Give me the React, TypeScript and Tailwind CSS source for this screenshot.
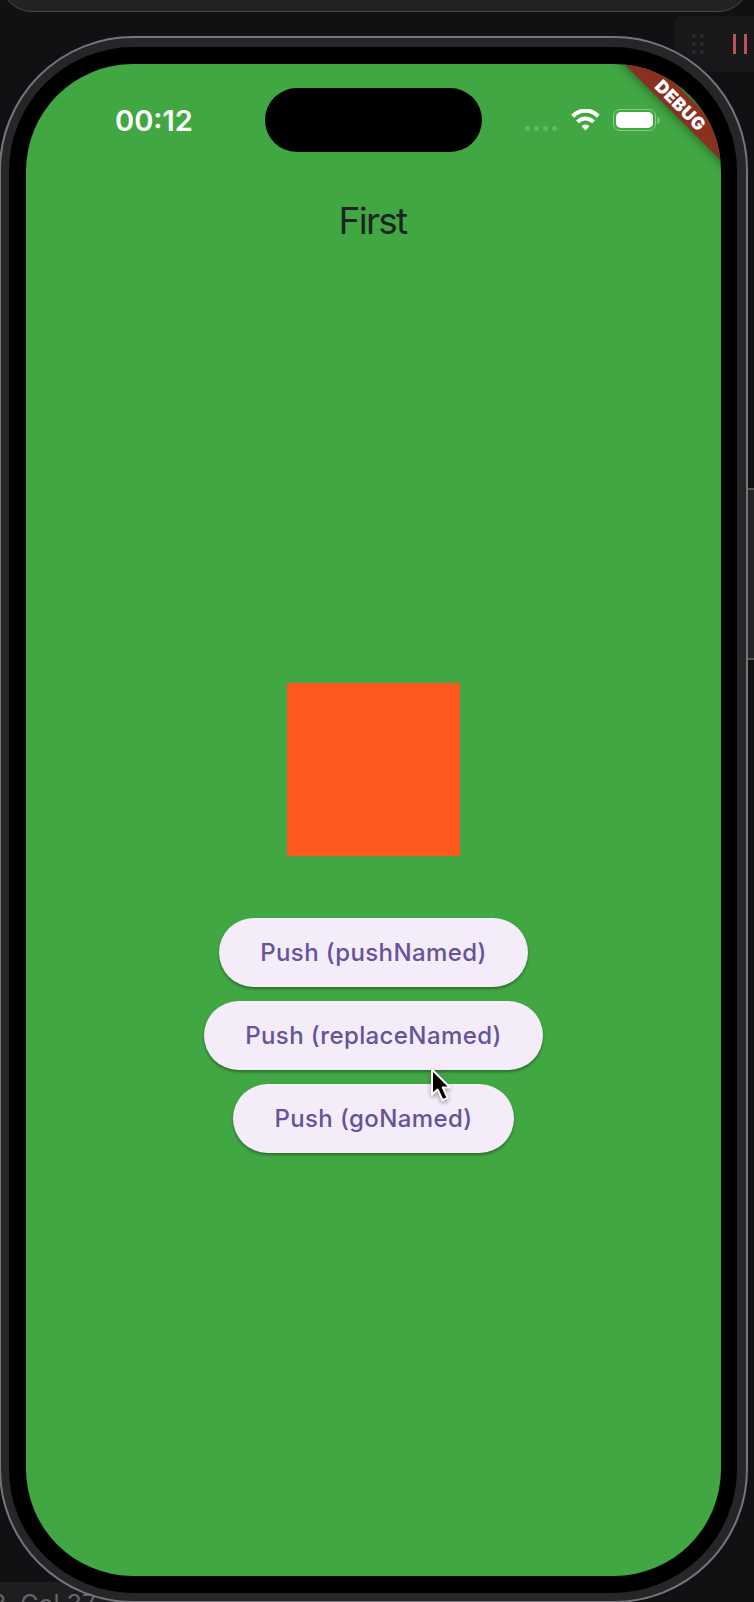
import React from "react";

const actions = [
  { label: "Push (pushNamed)", width: "w-[309px]" },
  { label: "Push (replaceNamed)", width: "w-[339px]" },
  { label: "Push (goNamed)", width: "w-[281px]" },
];

function WifiIcon() {
  return (
    <svg width="30" height="22" viewBox="0 0 30 22" fill="none" stroke="#fff">
      <path d="M1.8 7.2C8.8 -.1 20.2 -.1 27.2 7.2" strokeWidth="4.2" />
      <path d="M6.5 12.8C11 8.3 18 8.3 22.5 12.8" strokeWidth="4" />
      <path d="M10.5 17.3C12.7 14.8 16.3 14.8 18.5 17.3L14.5 21.5Z" fill="#fff" stroke="none" />
    </svg>
  );
}

function Battery() {
  return (
    <div className="flex items-center gap-[1px]">
      <div className="h-[22px] w-[43px] rounded-[7px] border border-[#8ccb8e] p-[2px]">
        <div className="h-full w-[37px] rounded-[5px] bg-white" />
      </div>
      <div className="h-[7px] w-[3px] rounded-r-full bg-[#6fc072]" />
    </div>
  );
}

function StatusBar() {
  return (
    <div className="flex h-[112px] shrink-0 pt-6">
      <div className="w-[239px] pt-[16px] pl-[89px] text-[29px] leading-[34px] font-semibold whitespace-nowrap text-white">
        00:12
      </div>
      <div className="h-[64px] w-[217px] rounded-full bg-black" />
      <div className="flex h-[64px] items-center pl-[43px]">
        <div className="mt-[16px] flex w-[46px] gap-[4px]">
          {[0, 1, 2, 3].map((dot) => (
            <span key={dot} className="size-[5px] rounded-full bg-[#62b965]" />
          ))}
        </div>
        <WifiIcon />
        <div className="pl-3">
          <Battery />
        </div>
      </div>
    </div>
  );
}

function DebugBanner() {
  return (
    <div className="absolute top-[30px] right-[-60px] flex h-[22px] w-[200px] rotate-45 items-center justify-center bg-[#8a3020] pt-[1px] text-[17.5px] leading-none font-black tracking-[0.5px] text-white shadow-[0_0_11px_rgba(0,0,0,0.5)]">
      DEBUG
    </div>
  );
}

function Pointer() {
  return (
    <svg
      className="absolute top-[1066px] left-[429px] drop-shadow-[0_2px_2px_rgba(0,0,0,0.35)]"
      width="24"
      height="38"
      viewBox="0 0 24 38"
    >
      <path
        d="M3 3.5V28.5L8.6 23.6L13.6 34.2L18.6 31.9L13.8 21.5H21Z"
        fill="#000"
        stroke="#fff"
        strokeWidth="2"
        strokeLinejoin="round"
      />
    </svg>
  );
}

function Backdrop() {
  return (
    <>
      <div className="absolute top-[-40px] left-0 h-[52px] w-[750px] rounded-b-[32px] border border-[#4b4a3b] bg-[#222221]" />
      <div className="absolute top-[16px] left-[674px] flex h-[56px] w-[90px] rounded-l-lg bg-[#18181a]">
        <div className="mt-[18px] ml-[18px] grid h-[20px] w-[12px] grid-cols-2 gap-x-[4px] gap-y-[4px]">
          {[0, 1, 2, 3, 4, 5].map((dot) => (
            <span key={dot} className="size-1 rounded-full bg-[#2c2c2e]" />
          ))}
        </div>
        <div className="mt-[18px] ml-[29px] flex gap-[8px]">
          <span className="h-5 w-[3px] bg-[#bd5059]" />
          <span className="h-5 w-[3px] bg-[#bd5059]" />
        </div>
      </div>
      <div className="absolute top-[1582px] left-0 h-[20px] w-full overflow-hidden bg-[#1e1e20]">
        <div className="mt-[8px] ml-[-9px] text-[25px] leading-[28px] whitespace-nowrap text-[#66666a]">
          8, Col 37
        </div>
      </div>
      <div className="absolute top-[1582px] left-[300px] h-[20px] w-[454px] bg-[#111114]" />
      <div className="absolute top-[488px] left-[744px] h-[172px] w-[20px] border-2 border-[#55544f] bg-[#242426]" />
    </>
  );
}

export default function App() {
  return (
    <div className="relative h-[1602px] w-[754px] overflow-hidden bg-[#111114] font-['Inter',sans-serif]">
      <Backdrop />
      <div className="relative mt-[36px] ml-[-1px] h-[1567px] w-[749px] rounded-[134px] border-2 border-[#77757b] bg-[#262528] pt-[9px] pr-[9px] pb-[8px] pl-[8px]">
        <div className="h-full w-full rounded-[124px] bg-black pt-[17px] pl-[17px]">
          <div className="relative flex h-[1512px] w-[695px] flex-col overflow-hidden rounded-[107px] bg-[#41a743]">
            <StatusBar />
            <h1 className="flex h-[90px] items-center justify-center pr-[2px] text-[37px] font-normal tracking-[-1.7px] text-[#1d2422]">
              First
            </h1>
            <main className="flex flex-col items-center pt-[417px]">
              <div className="mr-[1px] size-[173px] bg-[#ff581d]" />
              <div className="mt-[62px] flex flex-col items-center gap-[14px]">
                {actions.map(({ label, width }) => (
                  <button
                    key={label}
                    className={`${width} h-[69px] rounded-full bg-[#f4ecf8] text-center text-[24px] font-medium tracking-[0.4px] whitespace-nowrap text-[#65539b] shadow-[0_2px_3px_rgba(0,0,0,0.35)]`}
                  >
                    {label}
                  </button>
                ))}
              </div>
            </main>
            <DebugBanner />
          </div>
        </div>
      </div>
      <Pointer />
    </div>
  );
}
